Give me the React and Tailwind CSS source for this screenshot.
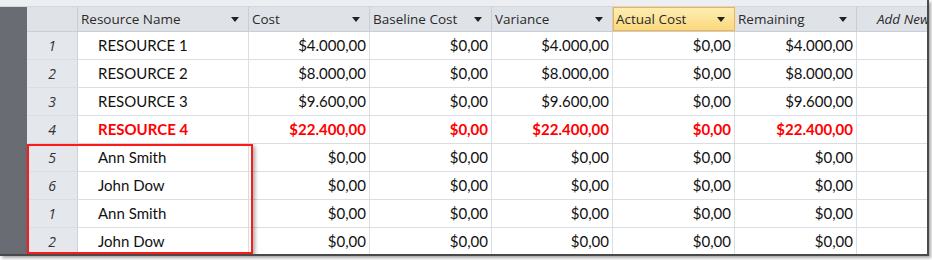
const cols = [
  { key: "cost", label: "Cost", w: "w-[121px]" },
  { key: "base", label: "Baseline Cost", w: "w-[122px]" },
  { key: "vari", label: "Variance", w: "w-[121px]" },
  { key: "act", label: "Actual Cost", w: "w-[122px]", active: true },
  { key: "rem", label: "Remaining", w: "w-[122px]" },
];

const rows = [
  { n: "1", name: "RESOURCE 1", v: ["$4.000,00", "$0,00", "$4.000,00", "$0,00", "$4.000,00"] },
  { n: "2", name: "RESOURCE 2", v: ["$8.000,00", "$0,00", "$8.000,00", "$0,00", "$8.000,00"] },
  { n: "3", name: "RESOURCE 3", v: ["$9.600,00", "$0,00", "$9.600,00", "$0,00", "$9.600,00"] },
  { n: "4", name: "RESOURCE 4", v: ["$22.400,00", "$0,00", "$22.400,00", "$0,00", "$22.400,00"], red: true },
  { n: "5", name: "Ann Smith", v: ["$0,00", "$0,00", "$0,00", "$0,00", "$0,00"] },
  { n: "6", name: "John Dow", v: ["$0,00", "$0,00", "$0,00", "$0,00", "$0,00"] },
  { n: "1", name: "Ann Smith", v: ["$0,00", "$0,00", "$0,00", "$0,00", "$0,00"] },
  { n: "2", name: "John Dow", v: ["$0,00", "$0,00", "$0,00", "$0,00", "$0,00"] },
];

function Arrow() {
  return (
    <svg width="8" height="5" viewBox="0 0 8 5" className="shrink-0">
      <path d="M0 0 L8 0 L4 5 Z" fill="#222" />
    </svg>
  );
}

function HeadCell({ label, w, active }) {
  return (
    <div
      className={`${w} h-full shrink-0 flex items-center justify-between pl-[3px] pr-[9px] border-r border-[#c9ced6] ${
        active ? "bg-gradient-to-b from-[#fdeeb4] to-[#fbd87a] outline outline-1 outline-[#f2b447] -outline-offset-1" : ""
      }`}
    >
      <span>{label}</span>
      <Arrow />
    </div>
  );
}

export default function App() {
  return (
    <div className="w-[932px] h-[260px] bg-white overflow-hidden">
      <div
        className="relative w-[929px] h-[256px] overflow-hidden border-r-2 border-b-2 border-[#4a4a4a] shadow-[2px_2px_3px_rgba(0,0,0,0.35)] bg-white"
        style={{ fontFamily: "Lato, 'Liberation Sans', sans-serif" }}
      >
        <div className="h-[7px] bg-[#eceef1] border-b border-[#d3d6db]" />
        <div className="flex">
          <div className="w-[27px] shrink-0 bg-[#696d73] h-[260px]" />
          <div className="flex-1 min-w-0">
            <div
              className="flex h-[25px] bg-[#dfe3e8] border-b border-[#c9ced6] text-[13.5px] text-[#2a2a2a]"
              style={{ fontFamily: "'Open Sans', 'Noto Sans', sans-serif" }}
            >
              <div className="w-[51px] shrink-0 h-full border-r border-[#c9ced6]" />
              <HeadCell label="Resource Name" w="w-[171px]" />
              {cols.map((c) => (
                <HeadCell key={c.key} label={c.label} w={c.w} active={c.active} />
              ))}
              <div className="flex-1 h-full flex items-center pl-[20px] italic whitespace-nowrap overflow-hidden">
                Add New Field
              </div>
            </div>
            {rows.map((r, i) => (
              <div
                key={i}
                className={`flex h-[28px] border-b border-[#dadde1] text-[15px] ${
                  r.red ? "text-[#ff0000] font-bold" : "text-[#111]"
                }`}
              >
                <div
                  className="w-[51px] shrink-0 h-full flex items-center justify-center bg-[#e4e7eb] border-r border-[#cfd3d9] italic text-[14px] text-[#333] font-normal"
                  style={{ fontFamily: "'Open Sans', 'Noto Sans', sans-serif" }}
                >
                  {r.n}
                </div>
                <div className="w-[171px] shrink-0 h-full flex items-center pl-[20px] border-r border-[#dadde1]">
                  {r.name}
                </div>
                {cols.map((c, j) => (
                  <div
                    key={c.key}
                    className={`${c.w} shrink-0 h-full flex items-center justify-end pr-[3px] border-r border-[#dadde1]`}
                  >
                    {r.v[j]}
                  </div>
                ))}
                <div className="flex-1" />
              </div>
            ))}
          </div>
        </div>
        <div className="absolute left-[27px] top-[144px] w-[226px] h-[110px] border-2 border-[#ff1a1a] shadow-[2px_2px_4px_rgba(0,0,0,0.35)]" />
      </div>
    </div>
  );
}
